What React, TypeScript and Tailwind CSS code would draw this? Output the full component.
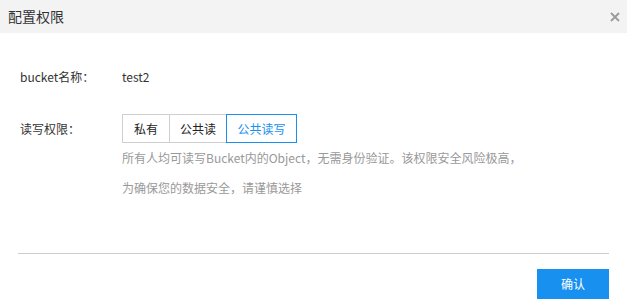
import { useState } from "react"

const options = ["私有", "公共读", "公共读写"]
const widths = ["w-[48px]", "w-[58px]", "w-[71px]"]

export default function App() {
  const [perm, setPerm] = useState(2)

  return (
    <div
      className="w-[627px] h-[304px] bg-white text-[12px] text-[#333] overflow-hidden"
      style={{ fontFamily: '"Noto Sans CJK SC", "Noto Sans", sans-serif' }}
    >
      {/* Header */}
      <div className="flex h-[33px] items-center justify-between bg-[#f3f3f3] pl-[8px] pr-[7px]">
        <h2 className="text-[14px] text-[#333]">配置权限</h2>
        <button className="flex h-[10px] w-[10px] items-center justify-center text-[#999]" aria-label="关闭">
          <svg width="10" height="10" viewBox="0 0 10 10">
            <path d="M1 1L9 9M9 1L1 9" stroke="#9a9a9a" strokeWidth="1.8" />
          </svg>
        </button>
      </div>

      {/* Body */}
      <div className="pl-[20px] pt-[36px]">
        <div className="flex h-[16px] items-center">
          <span className="w-[102px]">bucket名称：</span>
          <span>test2</span>
        </div>

        <div className="mt-[29px] flex">
          <span className="flex h-[29px] w-[102px] items-center">读写权限：</span>
          <div>
            <div className="flex h-[29px]">
              {options.map((opt, i) => (
                <button
                  key={opt}
                  onClick={() => setPerm(i)}
                  className={`${widths[i]} flex items-center justify-center border ${
                    i > 0 ? "-ml-px" : ""
                  } ${
                    perm === i
                      ? "relative z-10 border-[#1890f0] text-[#1890f0]"
                      : "border-[#cfcfcf] text-[#222]"
                  }`}
                >
                  {opt}
                </button>
              ))}
            </div>
            <p className="leading-[30px] text-[#999]">
              所有人均可读写Bucket内的Object，无需身份验证。该权限安全风险极高，
            </p>
            <p className="leading-[30px] text-[#999]">为确保您的数据安全，请谨慎选择</p>
          </div>
        </div>
      </div>

      {/* Footer */}
      <div className="mx-[18px] mt-[50px] border-t border-[#cccccc]" />
      <div className="flex justify-end pr-[18px] pt-[15px]">
        <button className="h-[30px] w-[72px] bg-[#1890f0] text-white">确认</button>
      </div>
    </div>
  )
}
